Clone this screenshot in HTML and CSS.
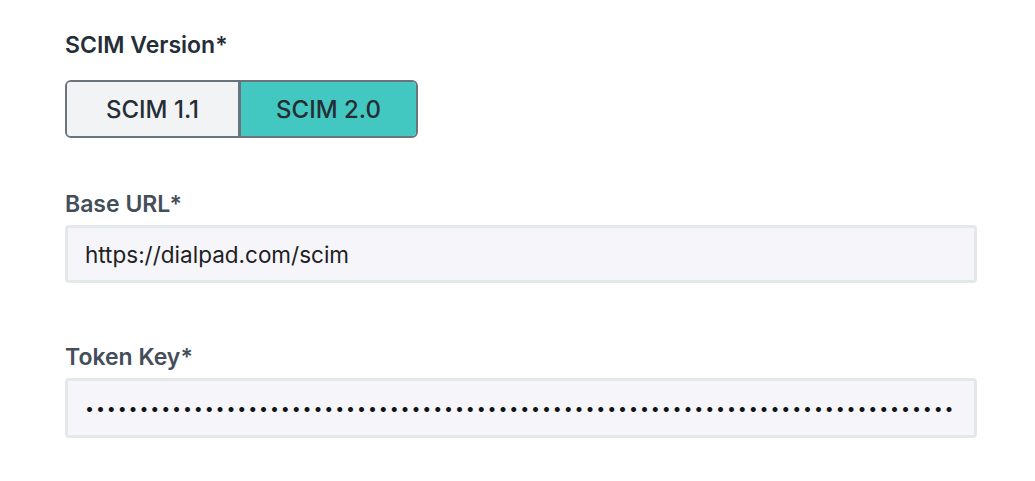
FILE: index.html
```html
<!DOCTYPE html>
<html lang="en">
<head>
<meta charset="utf-8">
<title>SCIM settings</title>
<link rel="stylesheet" href="styles.css">
</head>
<body>
<form class="form">
  <div class="field">
    <div class="label label-dark">SCIM Version*</div>
    <div class="segmented">
      <button type="button" class="seg">SCIM 1.1</button>
      <button type="button" class="seg seg-active">SCIM 2.0</button>
    </div>
  </div>
  <div class="field field-url">
    <div class="label">Base URL*</div>
    <div class="input"><span class="value">https://dialpad.com/scim</span></div>
  </div>
  <div class="field field-token">
    <div class="label">Token Key*</div>
    <div class="input input-token"><span class="dots">••••••••••••••••••••••••••••••••••••••••••••••••••••••••••••••••••••••••••••••••</span></div>
  </div>
</form>
</body>
</html>
```

FILE: styles.css
```css
html, body {
  margin: 0;
  padding: 0;
  background: #ffffff;
}

body {
  font-family: Inter, "Noto Sans", sans-serif;
  color: #222a33;
}

.form {
  display: flex;
  flex-direction: column;
  width: 912px;
  padding: 30px 0 0 65px;
}

.field {
  display: flex;
  flex-direction: column;
}

.field-url {
  margin-top: 51px;
}

.field-token {
  margin-top: 59px;
}

.label {
  font-size: 23px;
  font-weight: 600;
  line-height: 30px;
  color: #434e59;
  margin-bottom: 6px;
}

.label-dark {
  color: #252e38;
  margin-bottom: 20px;
}

.segmented {
  display: flex;
  align-self: flex-start;
  border: 2px solid #6b737b;
  border-radius: 6px;
  overflow: hidden;
}

.seg {
  font-family: Inter, "Noto Sans", sans-serif;
  font-size: 24px;
  font-weight: 500;
  color: #262d35;
  height: 54px;
  margin: 0;
  padding: 0;
  border: 0;
  background: #f2f3f5;
  width: 171px;
}

.seg-active {
  background: #42c8c0;
  border-left: 3px solid #6b737b;
  width: 178px;
}

.input {
  box-sizing: border-box;
  height: 58px;
  border: 3px solid #e3e8e8;
  border-radius: 4px;
  background: #f6f6fa;
  padding: 0 20px 0 17px;
  display: flex;
  align-items: center;
  overflow: hidden;
  white-space: nowrap;
}

.input-token {
  height: 60px;
}

.value {
  font-size: 22.5px;
  color: #1d2126;
}

.dots {
  font-size: 16px;
  letter-spacing: 1.88px;
  color: #111418;
}
```
